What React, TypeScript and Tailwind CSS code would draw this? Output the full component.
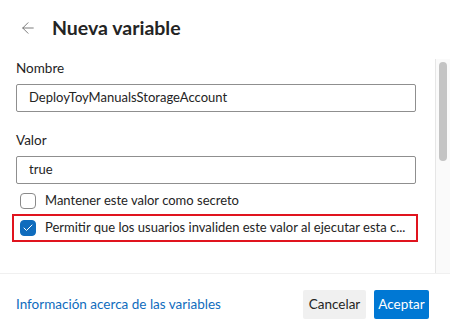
import { ArrowLeft, Check } from 'lucide-react'

// ─── Pieces ──────────────────────────────────────────────────────────────

function Field({ label, value }: { label: string; value: string }) {
  return (
    <div className="flex flex-col">
      <label className="h-5 text-[13.5px] leading-5 text-[#242424]">{label}</label>
      <div className="mt-[6px] flex h-[28px] items-center rounded-[2px] border border-[#8f8f8f] bg-white px-3 text-[13px] text-[#242424]">
        {value}
      </div>
    </div>
  )
}

function CheckRow({ checked, label }: { checked?: boolean; label: string }) {
  return (
    <div className="flex h-full min-w-0 items-center gap-[9px]">
      <span
        className={`flex h-4 w-4 shrink-0 items-center justify-center rounded-[4px] border ${
          checked ? 'border-[#0f6cbd] bg-[#0f6cbd]' : 'border-[#8a8a8a] bg-white'
        }`}
      >
        {checked && <Check className="h-3 w-3 text-white" strokeWidth={2} />}
      </span>
      <span className="whitespace-nowrap text-[13px] text-[#242424]">{label}</span>
    </div>
  )
}

// ─── Panel ───────────────────────────────────────────────────────────────

export default function App() {
  return (
    <div
      className="flex h-[330px] w-[450px] flex-col overflow-hidden bg-white"
      style={{ fontFamily: '"Segoe UI", Lato, "Noto Sans", Arial, sans-serif' }}
    >
      {/* Header */}
      <div className="flex h-[55px] shrink-0 items-center pl-[19px]">
        <ArrowLeft className="h-[18px] w-[18px] text-[#616161]" strokeWidth={1.1} />
        <h1 className="ml-[15px] text-[19.5px] font-bold text-[#242424]">Nueva variable</h1>
      </div>

      {/* Body + scrollbar */}
      <div className="flex min-h-0 flex-1">
        <div className="flex min-w-0 flex-1 flex-col pl-[16px] pr-[19px] pt-[3px]">
          <Field label="Nombre" value="DeployToyManualsStorageAccount" />
          <div className="mt-[18px]">
            <Field label="Valor" value="true" />
          </div>
          <div className="mt-[4px] h-[26px] pl-[4px]">
            <CheckRow label="Mantener este valor como secreto" />
          </div>
          <div className="-ml-[4px] -mr-[2px] h-[28px] border-2 border-[#e0141e] pl-[6px] pr-[4px]">
            <CheckRow
              checked
              label="Permitir que los usuarios invaliden este valor al ejecutar esta c..."
            />
          </div>
        </div>
        <div className="mt-[4px] flex w-[15px] shrink-0 justify-center border-l border-[#e6e6e6] bg-[#fafafa] pt-[3px]">
          <div className="h-[99px] w-[8px] rounded-full bg-[#c4c4c4]" />
        </div>
      </div>

      {/* Footer */}
      <div className="flex h-[57px] shrink-0 items-center border-t border-[#f0f0f0] pl-[16px] pr-[21px] pt-[5px]">
        <a className="text-[13.5px] text-[#0f6cbd]">Información acerca de las variables</a>
        <div className="ml-auto flex gap-[8px]">
          <button className="h-[29px] w-[63px] rounded-[2px] bg-[#f0f0f0] text-[13.5px] text-[#242424]">
            Cancelar
          </button>
          <button className="h-[29px] w-[55px] rounded-[2px] bg-[#0078d4] text-[13.5px] text-white">
            Aceptar
          </button>
        </div>
      </div>
    </div>
  )
}
